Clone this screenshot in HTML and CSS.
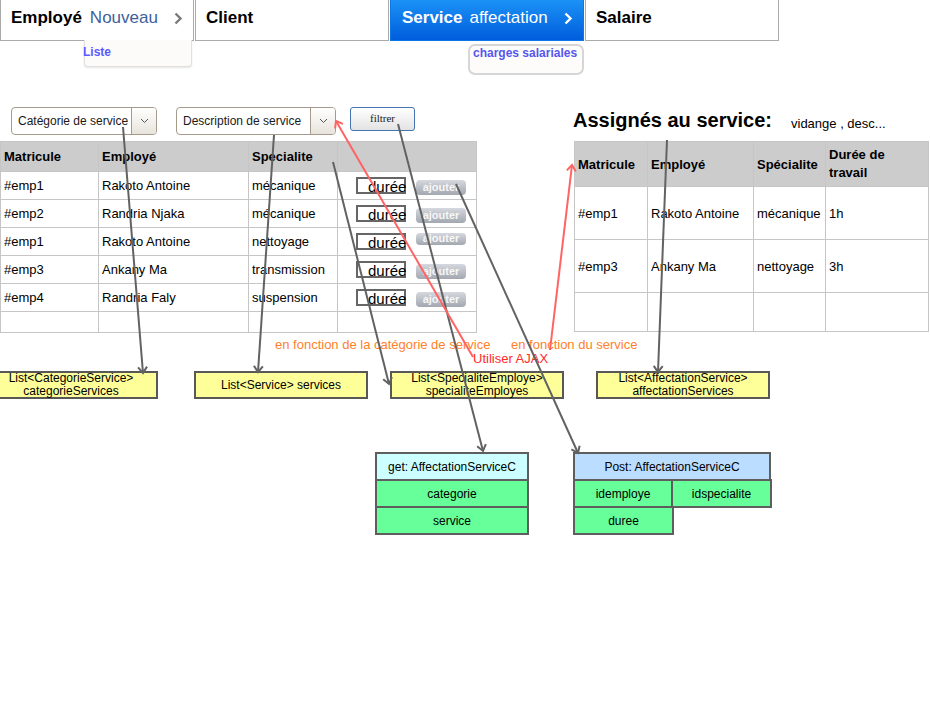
FILE: index.html
```html
<!DOCTYPE html>
<html lang="fr">
<head>
<meta charset="utf-8">
<title>Service affectation</title>
<link rel="stylesheet" href="styles.css">
</head>
<body>
<div class="page">
  <nav class="tabs">
    <div class="tab">
      <span class="tab-title">Employé</span><span class="tab-sub">Nouveau</span>
      <svg class="chev" viewBox="0 0 10 13" width="10" height="13"><polyline points="2.5,1.5 7.5,6.5 2.5,11.5" fill="none" stroke="#7a7a7a" stroke-width="2.4"/></svg>
    </div>
    <div class="tab"><span class="tab-title">Client</span></div>
    <div class="tab tab-active">
      <span class="tab-title">Service</span><span class="tab-sub">affectation</span>
      <svg class="chev" viewBox="0 0 10 13" width="10" height="13"><polyline points="2.5,1.5 7.5,6.5 2.5,11.5" fill="none" stroke="#ffffff" stroke-width="2.4"/></svg>
    </div>
    <div class="tab"><span class="tab-title">Salaire</span></div>
  </nav>

  <div class="menu menu-liste">Liste</div>
  <div class="menu menu-charges">charges salariales</div>

  <main class="workspace">
    <section class="panel-left">
      <div class="filters">
        <div class="select sel-cat">
          <span class="select-text">Catégorie de service</span>
          <span class="select-btn"><svg viewBox="0 0 9 6" width="9" height="6"><polyline points="1,1 4.5,4.5 8,1" fill="none" stroke="#555" stroke-width="1"/></svg></span>
        </div>
        <div class="select sel-desc">
          <span class="select-text">Description de service</span>
          <span class="select-btn"><svg viewBox="0 0 9 6" width="9" height="6"><polyline points="1,1 4.5,4.5 8,1" fill="none" stroke="#555" stroke-width="1"/></svg></span>
        </div>
        <button class="btn-filter" type="button">filtrer</button>
      </div>

      <div class="grid grid-left">
        <div class="cell th">Matricule</div>
        <div class="cell th">Employé</div>
        <div class="cell th">Specialite</div>
        <div class="cell th"></div>

        <div class="cell">#emp1</div>
        <div class="cell">Rakoto Antoine</div>
        <div class="cell">mécanique</div>
        <div class="cell act"><span class="duree">durée</span><span class="ajouter">ajouter</span></div>

        <div class="cell">#emp2</div>
        <div class="cell">Randria Njaka</div>
        <div class="cell">mécanique</div>
        <div class="cell act"><span class="duree">durée</span><span class="ajouter">ajouter</span></div>

        <div class="cell">#emp1</div>
        <div class="cell">Rakoto Antoine</div>
        <div class="cell">nettoyage</div>
        <div class="cell act"><span class="duree">durée</span><span class="ajouter ajouter-small">ajouter</span></div>

        <div class="cell">#emp3</div>
        <div class="cell">Ankany Ma</div>
        <div class="cell">transmission</div>
        <div class="cell act"><span class="duree">durée</span><span class="ajouter">ajouter</span></div>

        <div class="cell">#emp4</div>
        <div class="cell">Randria Faly</div>
        <div class="cell">suspension</div>
        <div class="cell act"><span class="duree">durée</span><span class="ajouter">ajouter</span></div>

        <div class="cell"></div>
        <div class="cell"></div>
        <div class="cell"></div>
        <div class="cell"></div>
      </div>
    </section>

    <section class="panel-right">
      <div class="assign-head">
        <h2 class="assign-title">Assignés au service:</h2>
        <span class="assign-desc">vidange , desc...</span>
      </div>
      <div class="grid grid-right">
        <div class="cell th">Matricule</div>
        <div class="cell th">Employé</div>
        <div class="cell th">Spécialite</div>
        <div class="cell th th-wrap">Durée de<br>travail</div>

        <div class="cell">#emp1</div>
        <div class="cell">Rakoto Antoine</div>
        <div class="cell">mécanique</div>
        <div class="cell">1h</div>

        <div class="cell">#emp3</div>
        <div class="cell">Ankany Ma</div>
        <div class="cell">nettoyage</div>
        <div class="cell">3h</div>

        <div class="cell"></div>
        <div class="cell"></div>
        <div class="cell"></div>
        <div class="cell"></div>
      </div>
    </section>
  </main>

  <div class="note note-cat">en fonction de la catégorie de service</div>
  <div class="note note-svc">en fonction du service</div>
  <div class="note note-ajax">Utiliser AJAX</div>

  <div class="node node-list list-1"><span>List&lt;CategorieService&gt;</span><span>categorieServices</span></div>
  <div class="node node-list list-2"><span>List&lt;Service&gt; services</span></div>
  <div class="node node-list list-3"><span>List&lt;SpecialiteEmploye&gt;</span><span>specialiteEmployes</span></div>
  <div class="node node-list list-4"><span>List&lt;AffectationService&gt;</span><span>affectationServices</span></div>

  <div class="entity entity-get">
    <div class="ebox ebox-head head-get">get: AffectationServiceC</div>
    <div class="ebox">categorie</div>
    <div class="ebox">service</div>
  </div>

  <div class="entity entity-post">
    <div class="ebox ebox-head head-post">Post: AffectationServiceC</div>
    <div class="erow">
      <div class="ebox ebox-a">idemploye</div>
      <div class="ebox ebox-b">idspecialite</div>
    </div>
    <div class="erow">
      <div class="ebox ebox-c">duree</div>
    </div>
  </div>

  <svg class="arrows" width="930" height="716" viewBox="0 0 930 716">
    <defs>
      <marker id="ah-gray" markerUnits="userSpaceOnUse" markerWidth="12" markerHeight="12" viewBox="0 0 12 12" refX="10" refY="6" orient="auto">
        <path d="M4,1.5 L10,6 L4,10.5" fill="none" stroke="#626262" stroke-width="2"/>
      </marker>
      <marker id="ah-red" markerUnits="userSpaceOnUse" markerWidth="12" markerHeight="12" viewBox="0 0 12 12" refX="10" refY="6" orient="auto">
        <path d="M4,1.5 L10,6 L4,10.5" fill="none" stroke="#ff6464" stroke-width="2"/>
      </marker>
    </defs>
    <line class="ln-gray" x1="123" y1="127" x2="143" y2="373" marker-end="url(#ah-gray)"/>
    <line class="ln-gray" x1="274" y1="135" x2="258" y2="372" marker-end="url(#ah-gray)"/>
    <line class="ln-gray" x1="333" y1="162" x2="389" y2="384" marker-end="url(#ah-gray)"/>
    <line class="ln-gray" x1="398" y1="124" x2="483" y2="451" marker-end="url(#ah-gray)"/>
    <line class="ln-gray" x1="456" y1="184" x2="578" y2="453" marker-end="url(#ah-gray)"/>
    <line class="ln-gray" x1="667" y1="140" x2="658" y2="372" marker-end="url(#ah-gray)"/>
    <line class="ln-red" x1="473" y1="357" x2="336" y2="121" marker-end="url(#ah-red)"/>
    <line class="ln-red" x1="550" y1="350" x2="572" y2="165" marker-end="url(#ah-red)"/>
  </svg>
</div>
</body>
</html>
```

FILE: styles.css
```css
* { box-sizing: border-box; }

html, body {
  margin: 0;
  padding: 0;
  background: #ffffff;
}

body {
  font-family: "Liberation Sans", Arial, sans-serif;
  color: #000;
}

.page {
  position: relative;
  width: 930px;
  height: 716px;
  overflow: hidden;
}

/* ---------- tabs ---------- */
.tabs {
  display: flex;
  gap: 1px;
  height: 41px;
}

.tab {
  width: 194px;
  height: 41px;
  border: 1px solid #aaaaaa;
  border-top: 0;
  background: #ffffff;
  display: flex;
  align-items: flex-start;
  padding: 8px 10px 0 10px;
  font-size: 17px;
  line-height: 20px;
  white-space: nowrap;
}

.tab-title { font-weight: bold; }

.tab-sub {
  margin-left: 8px;
  color: #41609a;
}

.chev {
  margin-left: auto;
  margin-top: 4px;
}

.tab-active {
  background: linear-gradient(#1b92f6, #005ddc);
  border-color: #0c78e8;
  color: #ffffff;
  padding-left: 11px;
}

.tab-active .tab-sub {
  color: #ffffff;
  margin-left: 7px;
}

/* ---------- drop menus ---------- */
.menu {
  position: absolute;
  font-size: 12px;
  font-weight: bold;
  line-height: 14px;
  color: #5a5aff;
  white-space: nowrap;
}

.menu-liste {
  left: 84px;
  top: 40px;
  width: 108px;
  height: 27px;
  background: #fcfbfa;
  border: 1px solid #e2e0de;
  border-top: 0;
  border-radius: 0 0 4px 4px;
  box-shadow: 0 1px 2px rgba(0, 0, 0, 0.10);
  padding-top: 5px;
  text-indent: -2px;
}

.menu-charges {
  left: 468px;
  top: 44px;
  width: 116px;
  height: 31px;
  background: #fdfcfb;
  border: 2px solid #d6d6d6;
  border-radius: 7px;
  padding-left: 3px;
  color: #5656ee;
}

/* ---------- workspace ---------- */
.workspace {
  display: flex;
  padding-top: 66px;
}

.panel-left {
  width: 477px;
}

.panel-right {
  margin-left: 96px;
}

.filters {
  display: flex;
  align-items: flex-start;
  height: 28px;
  padding-left: 11px;
}

.select {
  display: flex;
  height: 28px;
  border: 1px solid #a59a8b;
  border-radius: 4px;
  background: #ffffff;
  font-size: 12px;
  color: #1a1a1a;
  overflow: hidden;
}

.sel-cat { width: 146px; margin-right: 19px; }
.sel-desc { width: 160px; margin-right: 14px; }

.select-text {
  flex: 1;
  padding-left: 6px;
  line-height: 26px;
  white-space: nowrap;
  overflow: hidden;
}

.select-btn {
  width: 25px;
  border-left: 1px solid #a59a8b;
  background: linear-gradient(#ffffff, #e8e4dc);
  display: flex;
  align-items: center;
  justify-content: center;
}

.btn-filter {
  width: 65px;
  height: 24px;
  border: 1px solid #4474b2;
  border-radius: 3px;
  background: linear-gradient(#ffffff, #e3e3e3);
  font-family: "Liberation Serif", "Times New Roman", serif;
  font-size: 11px;
  font-weight: normal;
  line-height: 18px;
  color: #222222;
  padding: 0 0 2px 0;
}

/* ---------- tables ---------- */
.grid {
  display: grid;
  border-top: 1px solid #c6c6c6;
  border-left: 1px solid #c6c6c6;
  font-size: 13px;
}

.grid-left {
  margin-top: 6px;
  grid-template-columns: 98px 150px 89px 139px;
  grid-template-rows: 30px repeat(5, 28px) 21px;
}

.grid-right {
  margin-left: 1px;
  grid-template-columns: 73px 106px 72px 103px;
  grid-template-rows: 45px 53px 53px 39px;
}

.cell {
  border-right: 1px solid #c6c6c6;
  border-bottom: 1px solid #c6c6c6;
  padding: 0 3px;
  display: flex;
  align-items: center;
  white-space: nowrap;
}

.cell.th {
  background: #cccccc;
  font-weight: bold;
}

.th-wrap { line-height: 18px; }

.duree {
  width: 50px;
  height: 17px;
  margin-left: 15px;
  border: 2px solid #666666;
  font-size: 15px;
  line-height: 15px;
  padding-left: 10px;
  white-space: nowrap;
}

.ajouter {
  width: 50px;
  height: 15px;
  margin-left: 10px;
  margin-top: 3px;
  border-radius: 4px;
  background: linear-gradient(#d5d8de, #a3a7b0);
  color: #f6f6f6;
  font-size: 11px;
  font-weight: bold;
  line-height: 15px;
  text-align: center;
}

.ajouter-small {
  height: 12px;
  line-height: 11px;
  margin-top: -6px;
}

/* ---------- right heading ---------- */
.assign-head {
  display: flex;
  align-items: flex-start;
  height: 34px;
  padding-top: 1px;
}

.assign-title {
  margin: 0;
  font-size: 20px;
  line-height: 24px;
  font-weight: bold;
}

.assign-desc {
  margin-left: 19px;
  margin-top: 8px;
  font-size: 13px;
  line-height: 16px;
}

/* ---------- diagram notes ---------- */
.note {
  position: absolute;
  font-size: 13px;
  line-height: 16px;
  white-space: nowrap;
}

.note-cat { left: 275px; top: 337px; color: #ff7f2a; }
.note-svc { left: 511px; top: 337px; color: #ff7f2a; }
.note-ajax { left: 473px; top: 351px; color: #ff2a2a; }

/* ---------- diagram nodes ---------- */
.node {
  position: absolute;
  border: 2px solid #585858;
  font-size: 12px;
  line-height: 13px;
  text-align: center;
  display: flex;
  flex-direction: column;
  justify-content: center;
  align-items: center;
  white-space: nowrap;
}

.node-list {
  top: 371px;
  width: 174px;
  height: 28px;
  background: #ffff99;
}

.list-1 { left: -16px; }
.list-2 { left: 194px; }
.list-3 { left: 390px; }
.list-4 { left: 596px; }

.entity {
  position: absolute;
  top: 452px;
  display: flex;
  flex-direction: column;
  font-size: 12px;
}

.entity-get { left: 375px; width: 154px; }
.entity-post { left: 573px; width: 199px; }

.ebox {
  height: 29px;
  border: 2px solid #5e5e5e;
  background: #66ff99;
  display: flex;
  align-items: center;
  justify-content: center;
  white-space: nowrap;
}

.ebox + .ebox { margin-top: -2px; }

.head-get { background: #ccffff; }
.head-post { background: #bbddff; width: 198px; }

.erow {
  display: flex;
  margin-top: -2px;
}

.erow .ebox + .ebox { margin-top: 0; }

.ebox-a { width: 100px; }
.ebox-b { width: 101px; margin-left: -2px; }
.ebox-c { width: 101px; }

/* ---------- arrows ---------- */
.arrows {
  position: absolute;
  left: 0;
  top: 0;
  pointer-events: none;
}

.ln-gray {
  stroke: #626262;
  stroke-width: 2;
}

.ln-red {
  stroke: #ff6464;
  stroke-width: 2;
}
```
